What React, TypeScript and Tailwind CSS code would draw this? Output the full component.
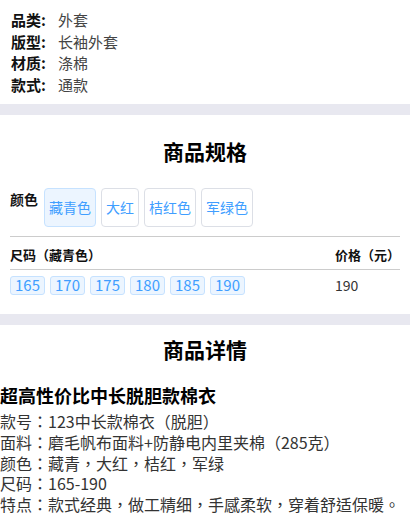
import React from 'react';

const FONT = '"Noto Sans CJK SC", "Noto Sans", sans-serif';
const FONT_TC = '"Noto Sans CJK TC", "Noto Sans CJK SC", sans-serif';

const basics = [
  { label: '品类', value: '外套' },
  { label: '版型', value: '长袖外套' },
  { label: '材质', value: '涤棉' },
  { label: '款式', value: '通款' },
];

const colors = ['藏青色', '大红', '桔红色', '军绿色'];
const sizes = ['165', '170', '175', '180', '185', '190'];

const details = [
  '款号：123中长款棉衣（脱胆）',
  '面料：磨毛帆布面料+防静电内里夹棉（285克）',
  '颜色：藏青，大红，桔红，军绿',
  '尺码：165-190',
  '特点：款式经典，做工精细，手感柔软，穿着舒适保暖。',
];

export default function App() {
  return (
    <div className="w-[410px] h-[520px] overflow-hidden bg-white text-[#222]" style={{ fontFamily: FONT }}>
      {/* basic info */}
      <div className="pt-[9px] pb-[9px] pl-[11px]">
        {basics.map((b) => (
          <div key={b.label} className="flex text-[15px] leading-[21.5px]">
            <span className="font-bold text-[#111] w-[47px]">{b.label}:</span>
            <span className="text-[#444]">{b.value}</span>
          </div>
        ))}
      </div>

      <div className="h-[11px] bg-[#e8e8f0]" />

      {/* spec */}
      <div className="pt-[22px]">
        <h2 className="text-center text-[21px] leading-[28px] font-bold text-black">商品规格</h2>
        <div className="flex items-start gap-[5px] pl-[10px] mt-[23px]">
          <span className="text-[14px] leading-[18px] font-bold text-[#111] mt-[2px] mr-[1px]">颜色</span>
          {colors.map((c, i) => (
            <div
              key={c}
              className={
                i === 0
                  ? 'h-[39px] px-[4px] flex items-center rounded-[4px] border border-[#c6e2ff] bg-[#ecf5ff] text-[14px] text-[#409eff]'
                  : 'h-[39px] px-[4px] flex items-center rounded-[4px] border border-[#dcdfe6] bg-white text-[14px] text-[#409eff]'
              }
            >
              {c}
            </div>
          ))}
        </div>
        <div className="mx-[10px] mt-[9px] border-t border-[#cccccc]" />
        <div
          className="flex justify-between mx-[10px] pt-[8px] pb-[4px] text-[13px] leading-[20px] font-bold text-[#111]"
          style={{ fontFamily: FONT_TC }}
        >
          <span>尺码（藏青色）</span>
          <span className="w-[65px] whitespace-nowrap">价格（元）</span>
        </div>
        <div className="mx-[10px] border-t border-[#cccccc]" />
        <div className="flex items-center justify-between mx-[10px] pt-[5px] pb-[18px]">
          <div className="flex gap-[5px]">
            {sizes.map((s) => (
              <span
                key={s}
                className="h-[19px] w-[35px] flex items-center justify-center rounded-[3px] border border-[#c6e2ff] bg-[#ecf5ff] text-[15px] text-[#409eff]"
              >
                {s}
              </span>
            ))}
          </div>
          <span className="w-[65px] text-[14px] text-[#333]">190</span>
        </div>
      </div>

      <div className="h-[11px] bg-[#e8e8f0]" />

      {/* detail */}
      <div className="pt-[10px]">
        <h2 className="text-center text-[21px] leading-[28px] font-bold text-black">商品详情</h2>
        <h3 className="mt-[20px] text-[18px] leading-[24px] font-bold text-black">超高性价比中长脱胆款棉衣</h3>
        <div className="mt-[4px]" style={{ fontFamily: FONT_TC }}>
          {details.map((d) => (
            <p key={d} className="text-[16px] leading-[20.75px] text-[#333] whitespace-nowrap">
              {d}
            </p>
          ))}
        </div>
      </div>
    </div>
  );
}
